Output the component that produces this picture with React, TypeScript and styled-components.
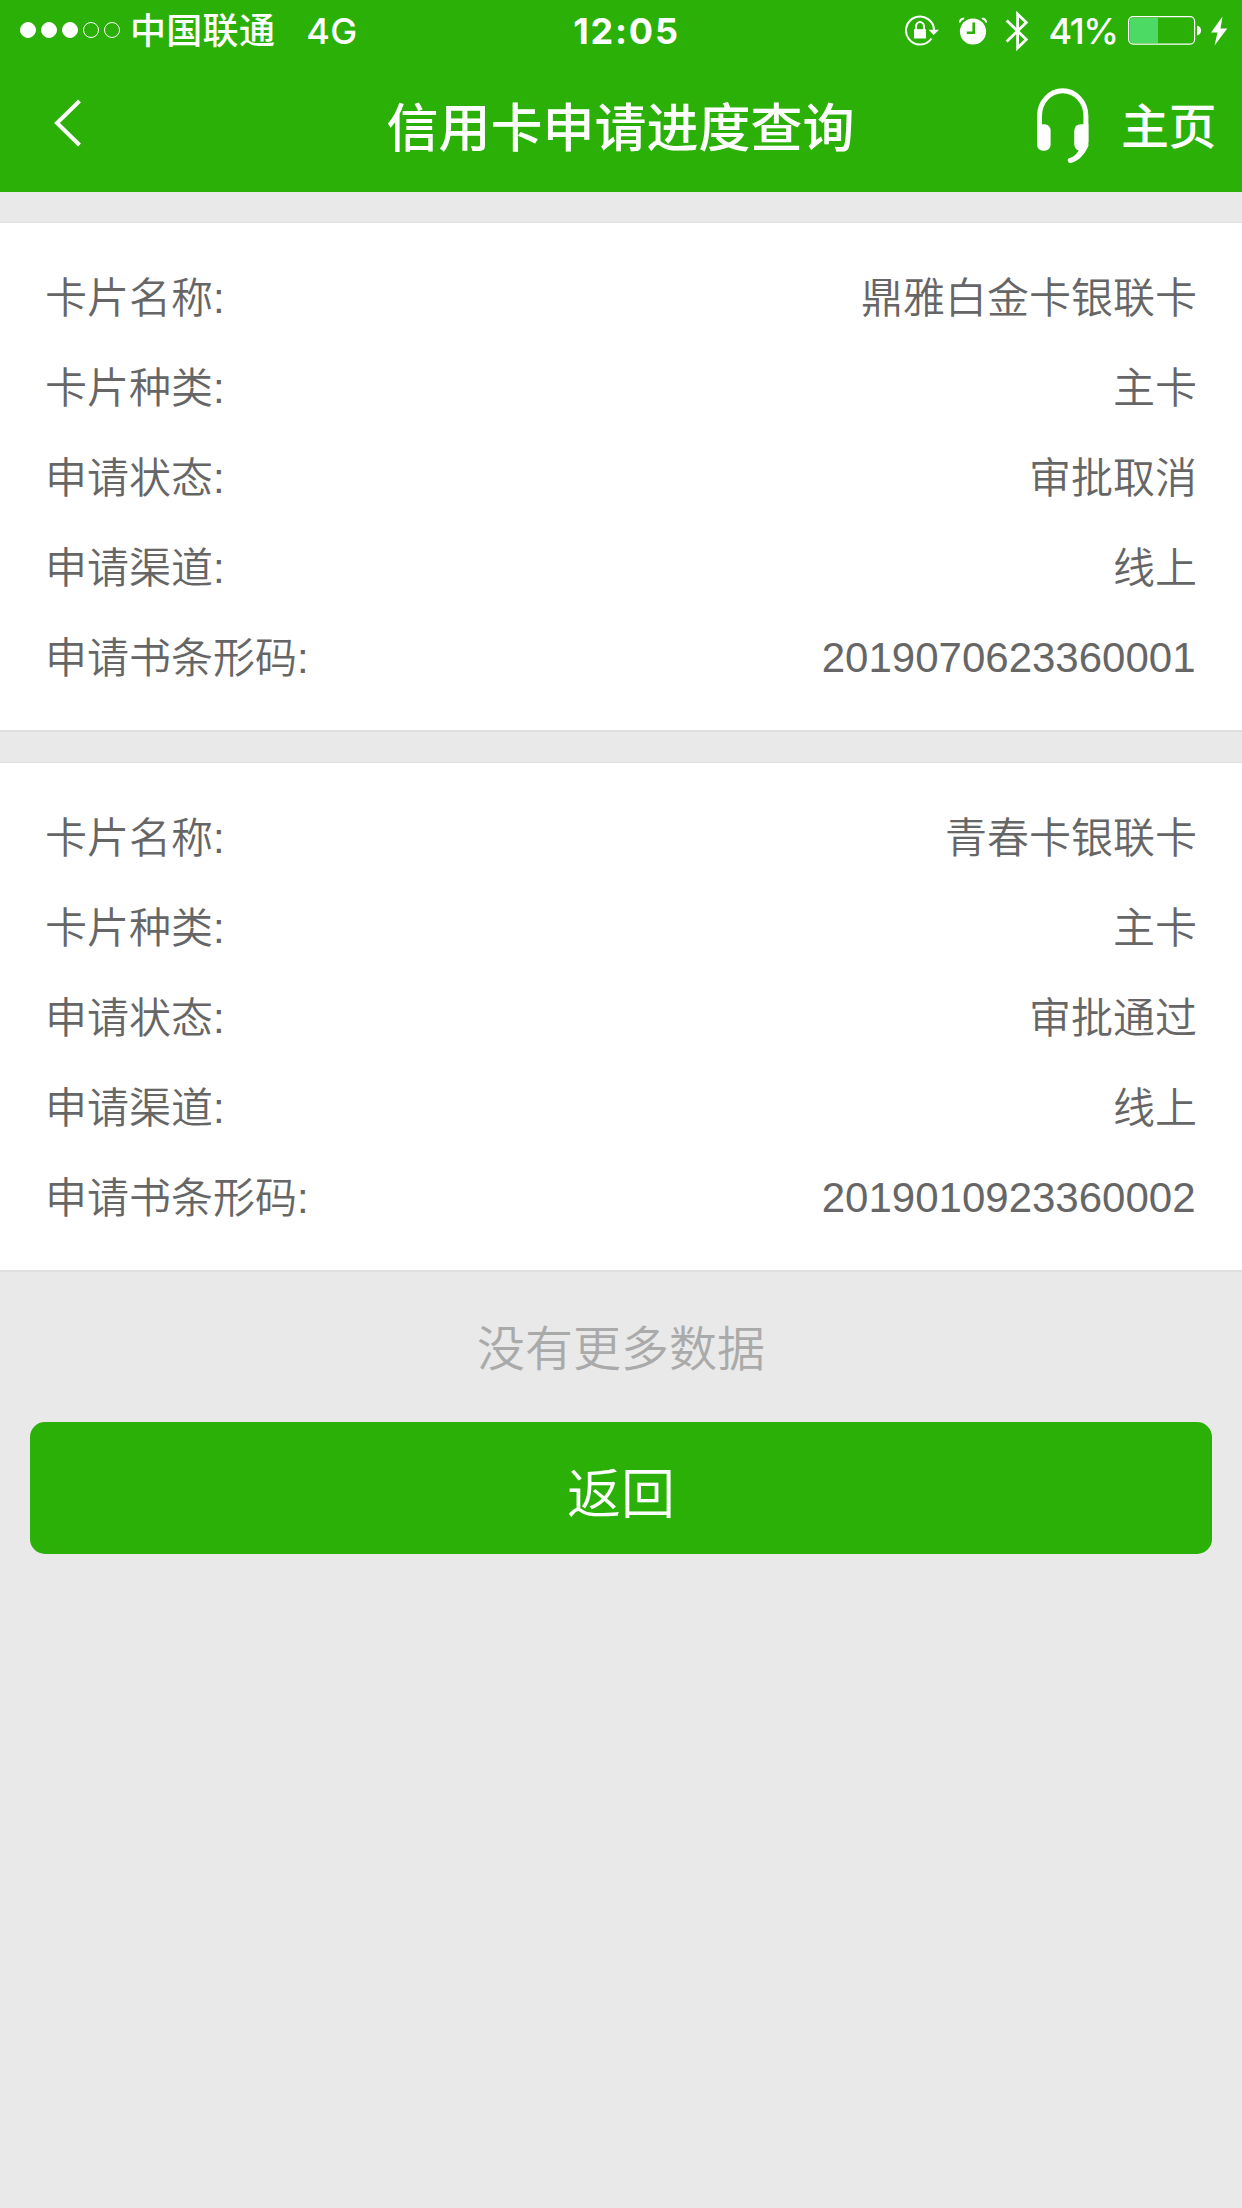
import React from 'react';
import styled, { createGlobalStyle } from 'styled-components';

const GREEN = '#2ab006';

const GlobalStyle = createGlobalStyle`
  * { box-sizing: border-box; }
  body {
    margin: 0;
    background: #e9e9e9;
    font-family: "Liberation Sans", "Noto Sans CJK SC", sans-serif;
    -webkit-font-smoothing: antialiased;
  }
`;

const Screen = styled.div`
  width: 1242px;
  min-height: 2208px;
  background: #e9e9e9;
`;

const Header = styled.header`
  height: 192px;
  background: ${GREEN};
  color: #fff;
`;

const StatusBar = styled.div`
  display: grid;
  grid-template-columns: 1fr auto 1fr;
  align-items: center;
  height: 60px;
  padding: 1px 14px 0 20px;
  font-family: Inter, "Noto Sans CJK SC", sans-serif;
  font-size: 36px;
  font-weight: 500;
  line-height: 60px;
`;

const StatusLeft = styled.div`
  display: flex;
  align-items: center;
`;

const StatusRight = styled.div`
  display: flex;
  align-items: center;
  justify-content: flex-end;
`;

const Signal = styled.div`
  display: flex;
  gap: 5px;
  margin: 0 10px 2px 0;
`;

const SignalDot = styled.span<{ $on: boolean }>`
  width: 16px;
  height: 16px;
  border: 1px solid #fff;
  border-radius: 50%;
  background: ${p => (p.$on ? '#fff' : 'transparent')};
`;

const Carrier = styled.span`
  letter-spacing: 0.3px;
`;

const Network = styled.span`
  margin-left: 31px;
  letter-spacing: 0.3px;
`;

const Clock = styled.span`
  font-weight: 700;
  letter-spacing: 1.8px;
  padding-left: 5px;
`;

const Percent = styled.span`
  width: 68.5px;
  margin-right: 11px;
  letter-spacing: -1.4px;
`;

const Icon = styled.svg<{ $gap?: number; $drop?: number }>`
  display: block;
  flex: none;
  margin-right: ${p => p.$gap ?? 0}px;
  margin-bottom: ${p => p.$drop ?? 0}px;
`;

const NavBar = styled.div`
  display: grid;
  grid-template-columns: 1fr auto 1fr;
  align-items: center;
  height: 132px;
  padding: 0 26px 0 53px;
`;

const BackLink = styled.a`
  display: flex;
  padding-bottom: 7px;
`;

const Title = styled.h1`
  margin: 0;
  padding-top: 6px;
  width: 496px;
  white-space: nowrap;
  font-size: 52px;
  font-weight: 500;
  line-height: 60px;
`;

const NavActions = styled.div`
  display: flex;
  align-items: center;
  justify-content: flex-end;
`;

const HomeLink = styled.a`
  padding-top: 4px;
  font-size: 48px;
  font-weight: 500;
  line-height: 60px;
  letter-spacing: -0.5px;
`;

const List = styled.main`
  display: flex;
  flex-direction: column;
  gap: 30px;
  padding-top: 30px;
`;

const Card = styled.section`
  height: 510px;
  padding: 31px 45px 0;
  background: #fff;
  border-top: 1px solid #e0e0e0;
  border-bottom: 2px solid #dfdfdf;
`;

const Row = styled.div`
  display: flex;
  justify-content: space-between;
  height: 90px;
  color: #666;
  font-size: 42px;
  font-weight: 350;
  line-height: 90px;
`;

const Value = styled.span<{ $numeric: boolean }>`
  line-height: ${p => (p.$numeric ? 88 : 90)}px;
  padding-right: ${p => (p.$numeric ? 1.5 : 0)}px;
`;

const Empty = styled.p`
  margin: 0;
  padding-top: 42px;
  height: 150px;
  color: #aaa;
  font-size: 48px;
  font-weight: 350;
  line-height: 72px;
  text-align: center;
`;

const BackButton = styled.button`
  display: block;
  width: 1182px;
  height: 132px;
  margin: 0 30px;
  padding: 14px 0 0;
  border: 0;
  border-radius: 15px;
  background: ${GREEN};
  color: #fff;
  font-family: inherit;
  font-size: 54px;
  font-weight: 350;
  line-height: 118px;
`;

const applications = [
  [
    ['卡片名称:', '鼎雅白金卡银联卡'],
    ['卡片种类:', '主卡'],
    ['申请状态:', '审批取消'],
    ['申请渠道:', '线上'],
    ['申请书条形码:', '2019070623360001'],
  ],
  [
    ['卡片名称:', '青春卡银联卡'],
    ['卡片种类:', '主卡'],
    ['申请状态:', '审批通过'],
    ['申请渠道:', '线上'],
    ['申请书条形码:', '2019010923360002'],
  ],
];

const RotationLock = () => (
  <Icon width="36" height="32" viewBox="0 0 36 32" $gap={18.3} $drop={1}>
    <path d="M27.5 23.5A14 14 0 1 1 30 15.5" fill="none" stroke="#fff" strokeWidth="2" />
    <path d="M24.5 14.8h10.500L29.700 20z" fill="#fff" />
    <path d="M10 14.2h12v9.300H10z" fill="#fff" />
    <path d="M12 15v-3.500a4 4.500 0 0 1 8 0V15" fill="none" stroke="#fff" strokeWidth="2" />
  </Icon>
);

const Alarm = () => (
  <Icon width="30" height="28" viewBox="0 0 30 28" $gap={16.2} $drop={1}>
    <circle cx="15" cy="14.5" r="13.100" fill="#fff" />
    <path d="M15.700 5.500v10.300H8.800" fill="none" stroke={GREEN} strokeWidth="2.600" />
    <path d="M1 5.800C.8 2.500 3 .3 6.500.800L5.800 2.600Q3.200 3.300 2.600 5.600zM29 5.800C29.200 2.500 27 .3 23.500.800l.7 1.800q2.600.7 3.200 3z" fill="#fff" />
  </Icon>
);

const Bluetooth = () => (
  <Icon width="24" height="42" viewBox="0 0 24 42" $gap={20} $drop={1}>
    <path d="M1.700 10.500L21.300 29.500 12.600 38V4l8.700 8.500L1.700 31.500" fill="none" stroke="#fff" strokeWidth="2.800" />
  </Icon>
);

const Battery = () => (
  <Icon width="74" height="30" viewBox="0 0 74 30" $gap={8} $drop={2}>
    <rect x="0.600" y="1.600" width="66" height="27.500" rx="4.500" fill="none" stroke="#fff" strokeWidth="1.200" />
    <path d="M4 3h26v25H4a2 2 0 0 1-2-2V5a2 2 0 0 1 2-2z" fill="#4cd964" />
    <path d="M69 10.500q4 1 4 5t-4 5z" fill="#fff" />
  </Icon>
);

const Bolt = () => (
  <Icon width="18" height="30" viewBox="0 0 18 30" $drop={1}>
    <path d="M12.500 0.500L1 16.500h6.500L4.500 29.500 17.300 12.500h-6.800z" fill="#fff" />
  </Icon>
);

const Headset = () => (
  <Icon width="54" height="78" viewBox="0 0 54 78" $gap={30.7}>
    <path d="M3.500 50V28.800a23.200 25 0 0 1 46.400 0V55" fill="none" stroke="#fff" strokeWidth="5" />
    <rect x="1" y="37.300" width="13.600" height="26.500" rx="6" fill="#fff" />
    <path d="M45 37.300h7.400V59L47 64.500c-6-.5-8.800-3-8.800-8V44.500q0-7.200 6.800-7.200z" fill="#fff" />
    <path d="M52.400 58.500C50 65.500 43 74.500 34.800 76a2.500 2.500 0 0 1-1-4.900C38 69.500 41.500 66.500 43.500 62z" fill="#fff" />
  </Icon>
);

export default function App() {
  return (
    <>
      <GlobalStyle />
      <Screen>
        <Header>
          <StatusBar>
            <StatusLeft>
              <Signal>
                {[0, 1, 2, 3, 4].map(i => <SignalDot key={i} $on={i < 3} />)}
              </Signal>
              <Carrier>中国联通</Carrier>
              <Network>4G</Network>
            </StatusLeft>
            <Clock>12:05</Clock>
            <StatusRight>
              <RotationLock />
              <Alarm />
              <Bluetooth />
              <Percent>41%</Percent>
              <Battery />
              <Bolt />
            </StatusRight>
          </StatusBar>
          <NavBar>
            <BackLink>
              <Icon width="30" height="50" viewBox="0 0 30 50">
                <path d="M26.500 3L4 25l22.500 22" fill="none" stroke="#fff" strokeWidth="4" />
              </Icon>
            </BackLink>
            <Title>信用卡申请进度查询</Title>
            <NavActions>
              <Headset />
              <HomeLink>主页</HomeLink>
            </NavActions>
          </NavBar>
        </Header>
        <List>
          {applications.map((rows, i) => (
            <Card key={i}>
              {rows.map(([label, value]) => (
                <Row key={label}>
                  <span>{label}</span>
                  <Value $numeric={/^\d+$/.test(value)}>{value}</Value>
                </Row>
              ))}
            </Card>
          ))}
        </List>
        <Empty>没有更多数据</Empty>
        <BackButton>返回</BackButton>
      </Screen>
    </>
  );
}
